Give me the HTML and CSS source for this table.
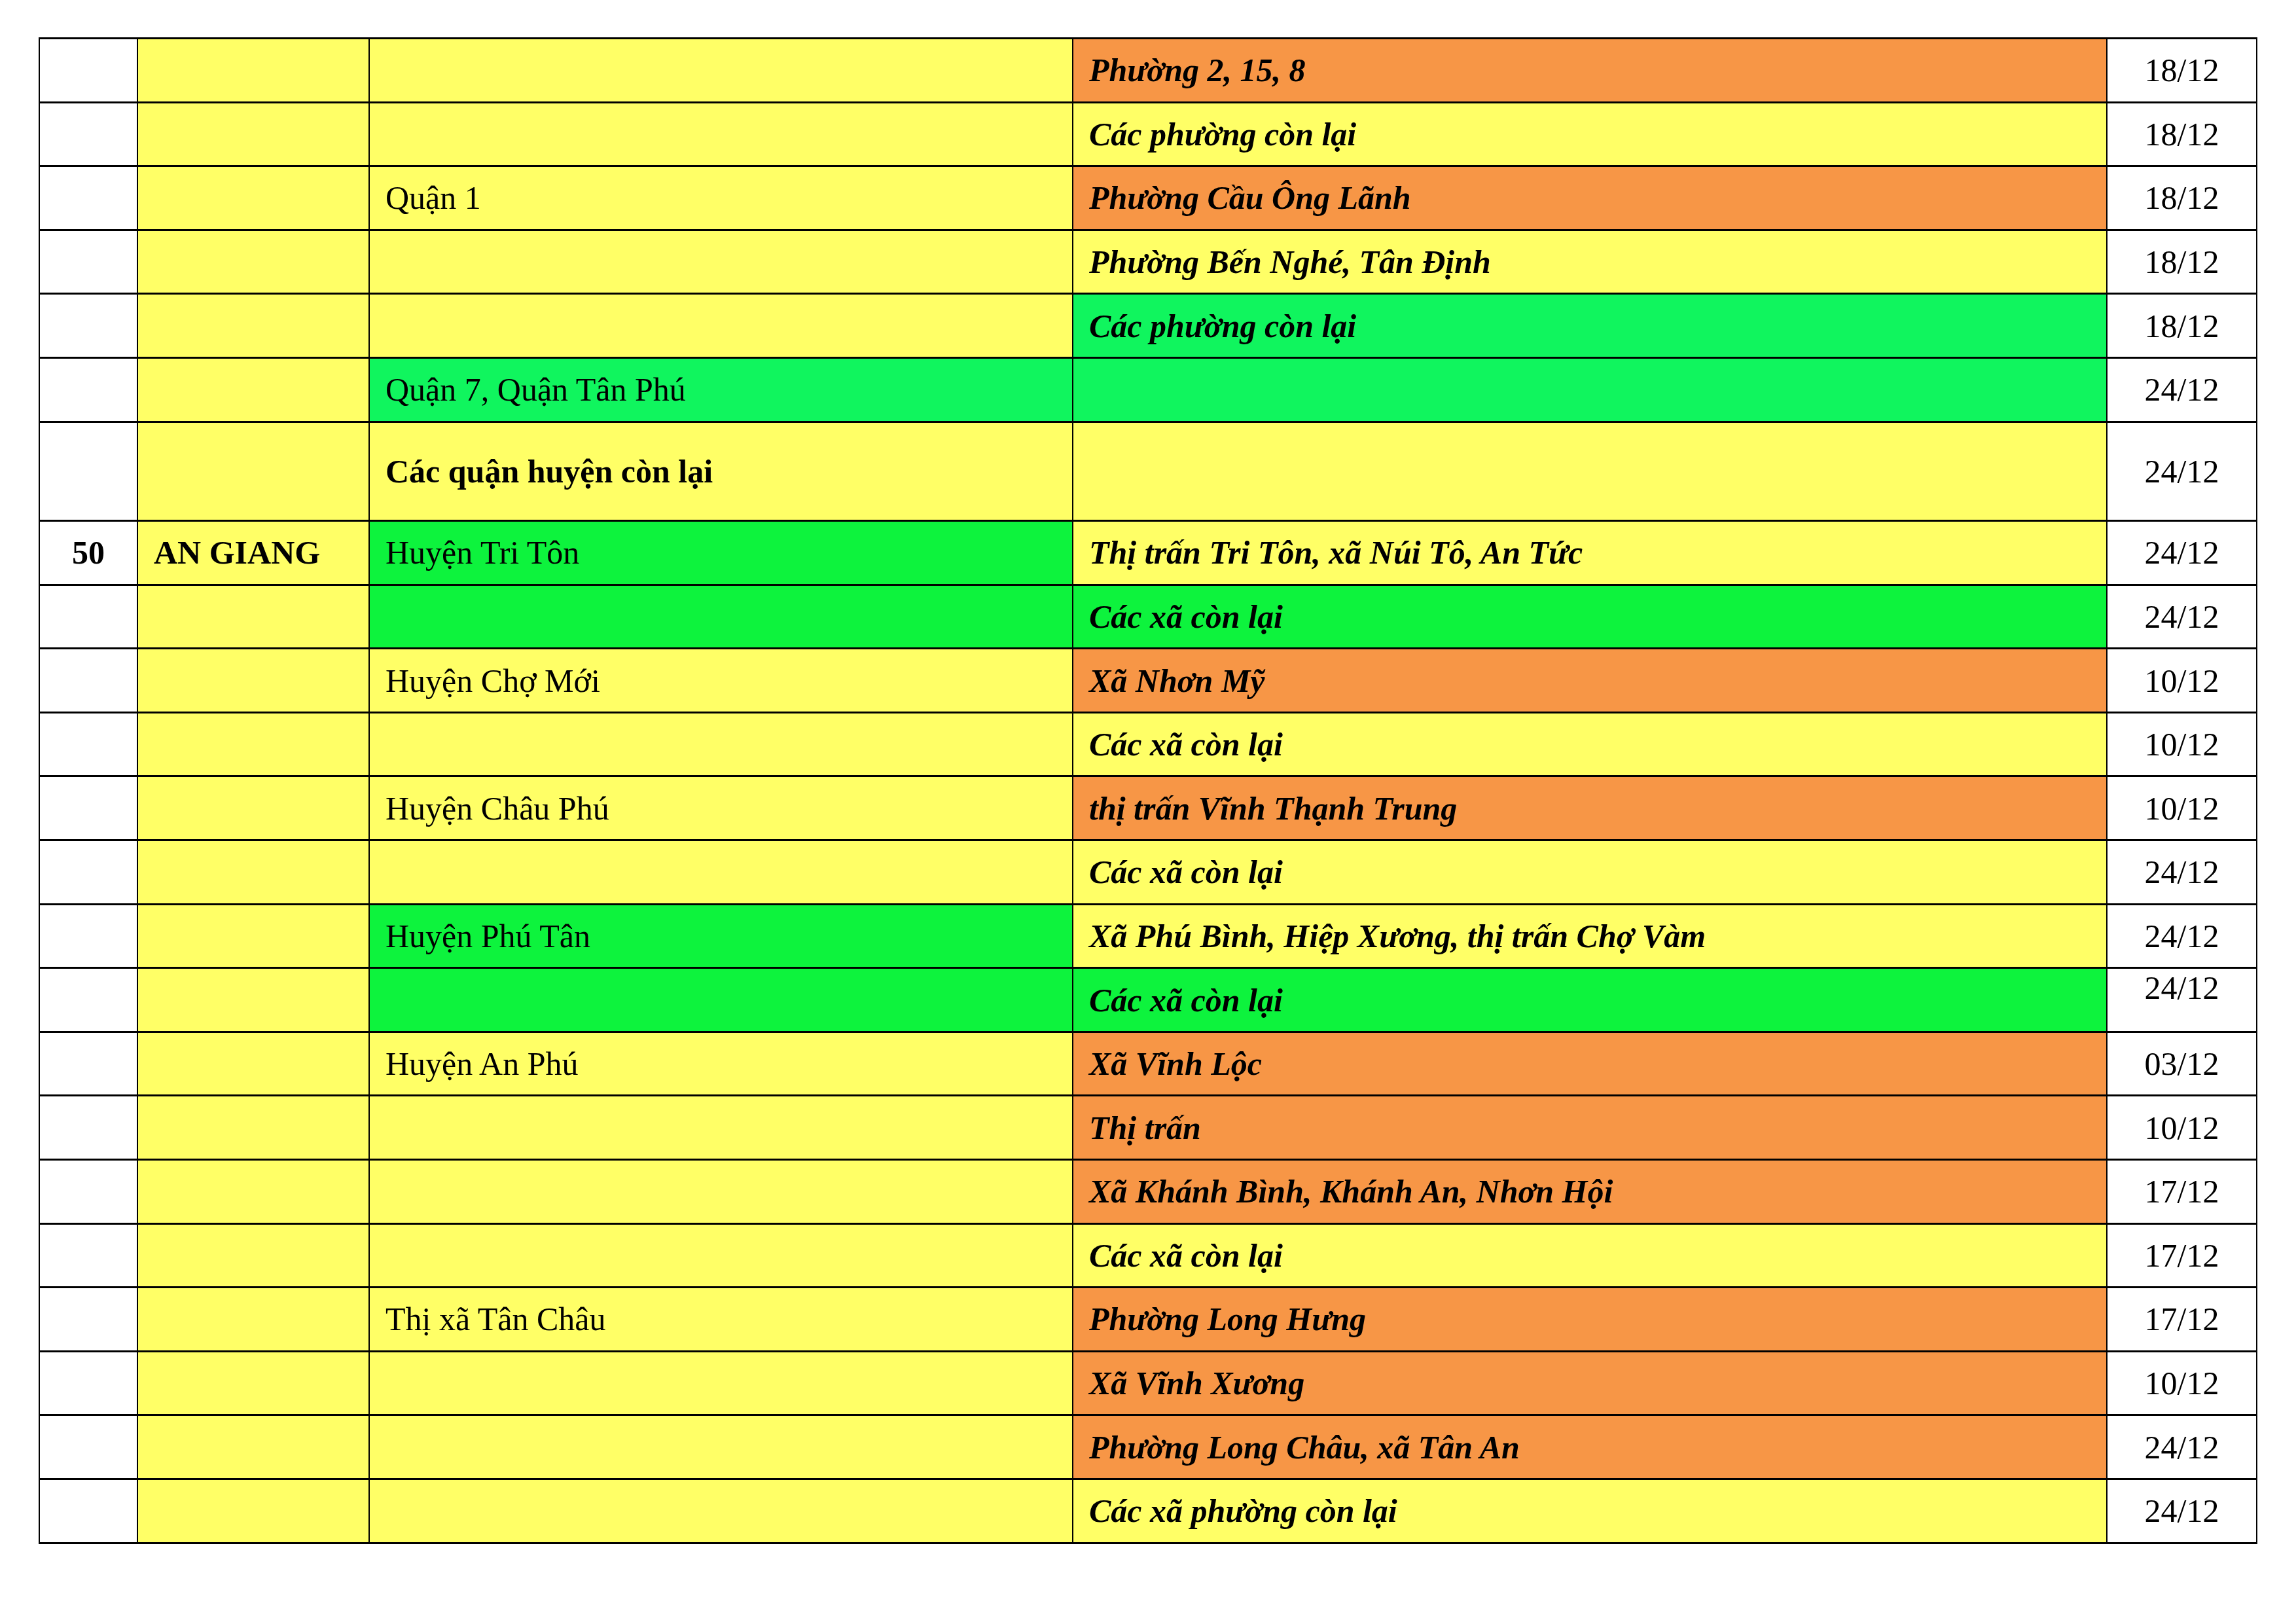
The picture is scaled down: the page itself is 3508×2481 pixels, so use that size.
FILE: index.html
```html
<!DOCTYPE html>
<html lang="vi">
<head>
<meta charset="utf-8">
<title>Lịch</title>
<link rel="stylesheet" href="styles.css">
</head>
<body>
<table class="sheet">
  <colgroup>
    <col class="c-stt"><col class="c-prov"><col class="c-dist"><col class="c-ward"><col class="c-date">
  </colgroup>
  <tbody>
    <tr><td class="stt"></td><td class="prov"></td><td class="dist y"></td><td class="ward o">Phường 2, 15, 8</td><td class="date">18/12</td></tr>
    <tr><td class="stt"></td><td class="prov"></td><td class="dist y"></td><td class="ward y">Các phường còn lại</td><td class="date">18/12</td></tr>
    <tr><td class="stt"></td><td class="prov"></td><td class="dist y">Quận 1</td><td class="ward o">Phường Cầu Ông Lãnh</td><td class="date">18/12</td></tr>
    <tr><td class="stt"></td><td class="prov"></td><td class="dist y"></td><td class="ward y">Phường Bến Nghé, Tân Định</td><td class="date">18/12</td></tr>
    <tr><td class="stt"></td><td class="prov"></td><td class="dist y"></td><td class="ward g1">Các phường còn lại</td><td class="date">18/12</td></tr>
    <tr><td class="stt"></td><td class="prov"></td><td class="dist g1">Quận 7, Quận Tân Phú</td><td class="ward g1"></td><td class="date">24/12</td></tr>
    <tr class="tall"><td class="stt"></td><td class="prov"></td><td class="dist y strong">Các quận huyện còn lại</td><td class="ward y"></td><td class="date">24/12</td></tr>
    <tr><td class="stt">50</td><td class="prov">AN GIANG</td><td class="dist g2">Huyện Tri Tôn</td><td class="ward y">Thị trấn Tri Tôn, xã Núi Tô, An Tức</td><td class="date">24/12</td></tr>
    <tr><td class="stt"></td><td class="prov"></td><td class="dist g2"></td><td class="ward g2">Các xã còn lại</td><td class="date">24/12</td></tr>
    <tr><td class="stt"></td><td class="prov"></td><td class="dist y">Huyện Chợ Mới</td><td class="ward o">Xã Nhơn Mỹ</td><td class="date">10/12</td></tr>
    <tr><td class="stt"></td><td class="prov"></td><td class="dist y"></td><td class="ward y">Các xã còn lại</td><td class="date">10/12</td></tr>
    <tr><td class="stt"></td><td class="prov"></td><td class="dist y">Huyện Châu Phú</td><td class="ward o">thị trấn Vĩnh Thạnh Trung</td><td class="date">10/12</td></tr>
    <tr><td class="stt"></td><td class="prov"></td><td class="dist y"></td><td class="ward y">Các xã còn lại</td><td class="date">24/12</td></tr>
    <tr><td class="stt"></td><td class="prov"></td><td class="dist g2">Huyện Phú Tân</td><td class="ward y">Xã Phú Bình, Hiệp Xương, thị trấn Chợ Vàm</td><td class="date">24/12</td></tr>
    <tr><td class="stt"></td><td class="prov"></td><td class="dist g2"></td><td class="ward g2">Các xã còn lại</td><td class="date top">24/12</td></tr>
    <tr><td class="stt"></td><td class="prov"></td><td class="dist y">Huyện An Phú</td><td class="ward o">Xã Vĩnh Lộc</td><td class="date">03/12</td></tr>
    <tr><td class="stt"></td><td class="prov"></td><td class="dist y"></td><td class="ward o">Thị trấn</td><td class="date">10/12</td></tr>
    <tr><td class="stt"></td><td class="prov"></td><td class="dist y"></td><td class="ward o">Xã Khánh Bình, Khánh An, Nhơn Hội</td><td class="date">17/12</td></tr>
    <tr><td class="stt"></td><td class="prov"></td><td class="dist y"></td><td class="ward y">Các xã còn lại</td><td class="date">17/12</td></tr>
    <tr><td class="stt"></td><td class="prov"></td><td class="dist y">Thị xã Tân Châu</td><td class="ward o">Phường Long Hưng</td><td class="date">17/12</td></tr>
    <tr><td class="stt"></td><td class="prov"></td><td class="dist y"></td><td class="ward o">Xã Vĩnh Xương</td><td class="date">10/12</td></tr>
    <tr><td class="stt"></td><td class="prov"></td><td class="dist y"></td><td class="ward o">Phường Long Châu, xã Tân An</td><td class="date">24/12</td></tr>
    <tr><td class="stt"></td><td class="prov"></td><td class="dist y"></td><td class="ward y">Các xã phường còn lại</td><td class="date">24/12</td></tr>
  </tbody>
</table>
</body>
</html>
```

FILE: styles.css
```css
html, body {
  margin: 0;
  padding: 0;
  background: #ffffff;
}

body {
  font-family: "Liberation Serif", "Times New Roman", serif;
  font-size: 50px;
  color: #000000;
}

.sheet {
  border-collapse: collapse;
  table-layout: fixed;
  width: 3390px;
  margin: 57px 0 0 59px;
}

.c-stt { width: 150px; }
.c-prov { width: 354px; }
.c-dist { width: 1075px; }
.c-ward { width: 1580px; }
.c-date { width: 229px; }

.sheet tr {
  height: 97.6px;
}

.sheet tr.tall {
  height: 151.5px;
}

.sheet td {
  border-top: 3px solid #000000;
  border-bottom: 3px solid #000000;
  border-left: 2px solid #000000;
  border-right: 2px solid #000000;
  padding: 0 24px;
  vertical-align: middle;
  white-space: nowrap;
  line-height: normal;
}

.stt {
  background: #ffffff;
  text-align: center;
  font-weight: bold;
  padding: 0;
}

.prov {
  background: #ffff66;
  font-weight: bold;
}

.dist {
  font-weight: normal;
}

.dist.strong {
  font-weight: bold;
}

.ward {
  font-weight: bold;
  font-style: italic;
}

.date {
  background: #ffffff;
  text-align: center;
  padding: 0;
}

.date.top {
  vertical-align: top;
}

.y { background: #ffff66; }
.o { background: #f79646; }
.g1 { background: #10f55e; }
.g2 { background: #0df33d; }
```
